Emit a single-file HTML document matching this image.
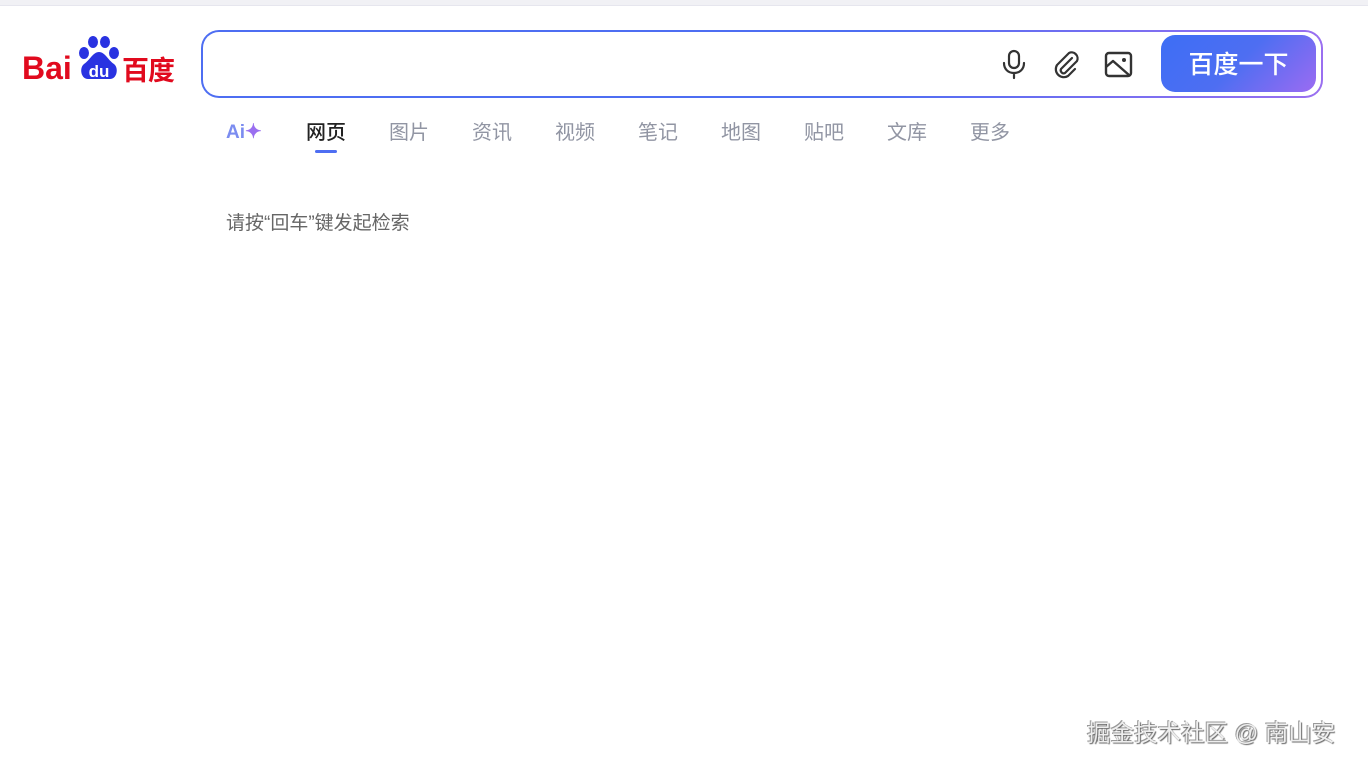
<!DOCTYPE html>
<html><head><meta charset="utf-8"><style>
body{margin:0;width:1368px;height:766px;background:#fff;position:relative;overflow:hidden;font-family:"Liberation Sans","Noto Sans CJK SC",sans-serif}
.top{position:absolute;left:0;top:0;width:1368px;height:5px;background:#f1f1f5;border-bottom:1px solid #e6e6ee}
.box{position:absolute;left:201px;top:30px;width:1122px;height:68px;border-radius:18px;background:linear-gradient(90deg,#4e6ef2,#4e6ef2 60%,#9a6ff0);}
.inner{position:absolute;left:2px;top:2px;right:2px;bottom:2px;background:#fff;border-radius:16px}
.btn{position:absolute;left:1161px;top:35px;width:155px;height:57px;border-radius:14px;background:linear-gradient(135deg,#3d6ef5,#4e6ef2 50%,#9b6bf2);color:#fff;font-size:25px;font-weight:500;text-align:center;line-height:60px}
.tabs span{position:absolute;top:116px;font-size:20px;color:#9195a3;white-space:nowrap}
.logo span{position:absolute;white-space:nowrap;font-weight:bold;color:#e10a1e}
</style></head><body>
<div class="top"></div>
<div class="logo"><span style="left:22px;top:50px;font-size:32px">Bai</span><span style="left:122px;top:49px;font-size:27px;letter-spacing:-1px">百度</span></div>
<svg style="position:absolute;left:75px;top:34px" width="48" height="48" viewBox="0 0 48 48">
<ellipse cx="9" cy="19" rx="5" ry="6" fill="#2932e1"/><ellipse cx="18" cy="8" rx="5" ry="6" fill="#2932e1"/><ellipse cx="30" cy="8" rx="5" ry="6" fill="#2932e1"/><ellipse cx="39" cy="19" rx="5" ry="6" fill="#2932e1"/>
<path d="M24 18c-6 0-9 8-15 12-5 4-3 15 4 15h22c7 0 9-11 4-15-6-4-9-12-15-12z" fill="#2932e1"/>
<text x="24" y="43" fill="#fff" font-size="17" font-weight="bold" text-anchor="middle" font-family="Liberation Sans">du</text></svg>
<div class="box"><div class="inner"></div></div>
<svg style="position:absolute;left:1000px;top:48px" width="28" height="32" viewBox="0 0 28 32" fill="none" stroke="#333" stroke-width="2.2" stroke-linecap="round"><rect x="9" y="3" width="10" height="17" rx="5"/><path d="M4 15c0 6 4 10 10 10s10-4 10-10M14 25v5"/></svg>
<svg style="position:absolute;left:1052px;top:50px" width="30" height="30" viewBox="0 0 30 30" fill="none" stroke="#333" stroke-width="2.2" stroke-linecap="round"><path d="M20 8L9 19a3 3 0 0 0 4 4l12-12a6 6 0 0 0-8-8L5 15a8 8 0 0 0 11 11l7-7"/></svg>
<svg style="position:absolute;left:1104px;top:51px" width="30" height="28" viewBox="0 0 30 28" fill="none" stroke="#333" stroke-width="2.4" stroke-linejoin="round"><rect x="2" y="2" width="25" height="23" rx="3"/><path d="M2 16l7-6 16 14"/><circle cx="20" cy="9" r="2" fill="#333" stroke="none"/></svg>
<div class="btn">百度一下</div>
<div class="tabs">
<span style="left:226px;font-weight:bold;color:#7b8cf0;font-size:19px;top:119px">Ai<span style="position:static;color:#9a6ff0">✦</span></span>
<span style="left:306px;color:#222;font-weight:500">网页</span>
<span style="left:389px">图片</span><span style="left:472px">资讯</span><span style="left:555px">视频</span><span style="left:638px">笔记</span><span style="left:721px">地图</span><span style="left:804px">贴吧</span><span style="left:887px">文库</span><span style="left:970px">更多</span>
</div>
<div style="position:absolute;left:315px;top:150px;width:22px;height:3px;border-radius:2px;background:#4e6ef2"></div>
<div style="position:absolute;left:226px;top:208px;font-size:19px;color:#666;white-space:nowrap">请按“回车”键发起检索</div>
<div style="position:absolute;left:1087px;top:714px;font-size:23.5px;color:#eee;white-space:nowrap;text-shadow:1px 1px 1px #666,-1px -1px 0 #999">掘金技术社区 @ 南山安</div>
</body></html>
